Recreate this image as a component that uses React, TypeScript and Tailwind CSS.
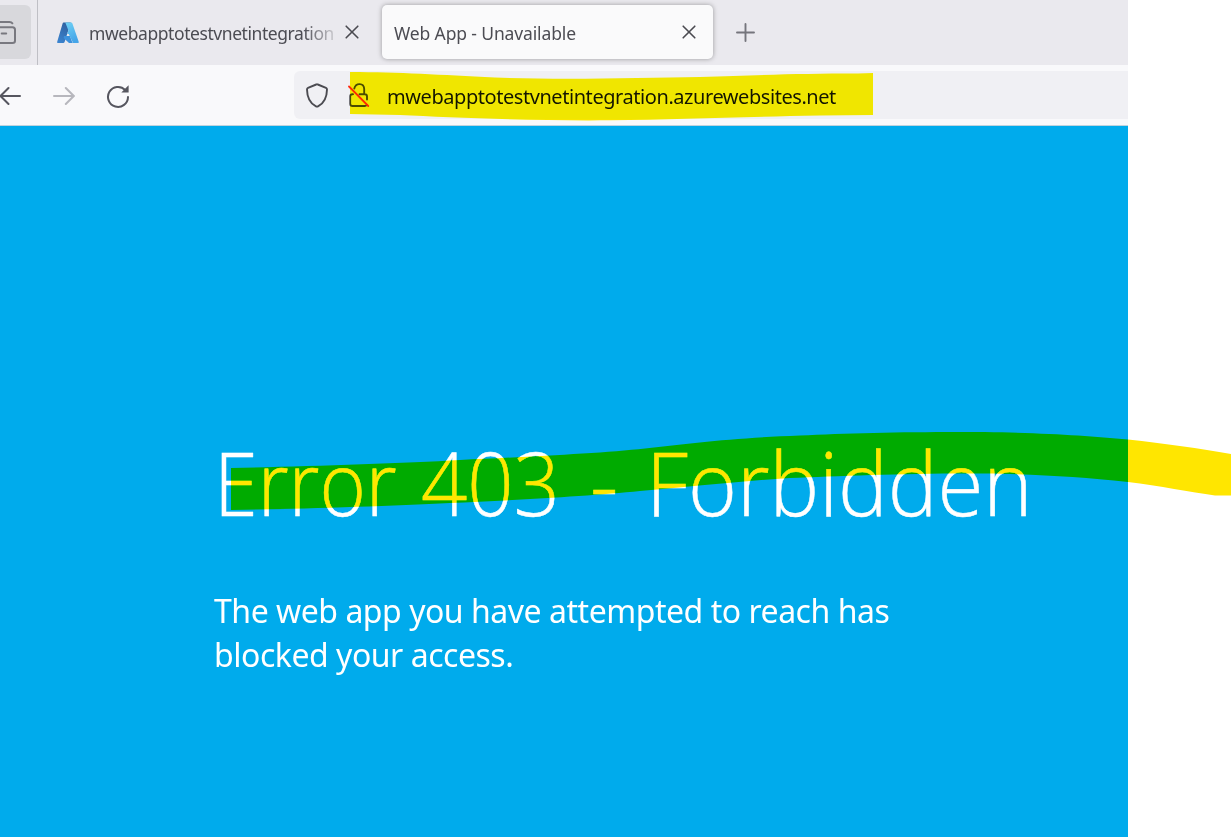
import React from "react";

function CloseIcon() {
  return (
    <svg width="14" height="14" viewBox="0 0 14 14" className="shrink-0" fill="none" stroke="#4a4a50" strokeWidth="1.6" strokeLinecap="round">
      <path d="M1.2 1.2 12.8 12.8M12.8 1.2 1.2 12.8" />
    </svg>
  );
}

function AzureIcon() {
  return (
    <svg width="22" height="22" viewBox="0 0 22 22" className="shrink-0">
      <defs>
        <linearGradient id="azl" x1="0.7" y1="0" x2="0.2" y2="1">
          <stop offset="0" stopColor="#2f5f9e" />
          <stop offset="1" stopColor="#3b84cf" />
        </linearGradient>
        <linearGradient id="azr" x1="0" y1="0" x2="0.4" y2="1">
          <stop offset="0" stopColor="#70d2f5" />
          <stop offset="1" stopColor="#46a5e8" />
        </linearGradient>
      </defs>
      <path d="M6.6 0.6h7.2L7.6 20c-.2.7-.7 1.1-1.4 1.1H1.2C.3 21.1 0 20.4.2 19.7L5.6 1.4c.1-.5.5-.8 1-.8Z" fill="url(#azl)" />
      <path d="M7 14h6l2.5 7.1H12L6.6 16Z" fill="#3c91dc" />
      <path d="M7.7.6h6.5c.6 0 1 .3 1.2.8l6.3 18.3c.3.8-.2 1.4-1 1.4h-6c.7-.2 1-.7.8-1.4L11.7 12H10.2l1.2-3.5L8.7 1.4C8.5.9 8.2.6 7.7.6Z" fill="url(#azr)" />
    </svg>
  );
}

function TabStrip() {
  return (
    <div className="flex h-[65px] shrink-0 bg-[#eae9ee] text-[#4c4c53]">
      <div className="flex w-[38px] shrink-0 border-r border-[#bfbfc5] pt-[5px]">
        <div className="h-[54px] w-[31px] rounded-r-[6px] bg-[#d8d8dc] pt-4">
          <svg width="16" height="23" viewBox="0 0 16 23" fill="none" stroke="#78787f" strokeWidth="2" strokeLinecap="round">
            <path d="M0 1h9.5Q11.5 1 12.3 2.3" />
            <path d="M0 6.2h12.5Q15 6.2 15 8.7v11Q15 22 12.5 22H0M1.7 12.5h4.5" />
          </svg>
        </div>
      </div>
      <div className="flex w-[344px] items-center pl-[19px]">
        <AzureIcon />
        <span className="ml-[10px] w-[248px] whitespace-nowrap pt-px text-[17.5px] tracking-[-0.43px] [mask-image:linear-gradient(to_right,black_214px,transparent_253px)]">
          mwebapptotestvnetintegration
        </span>
        <div className="mb-[2px] ml-[8px] flex"><CloseIcon /></div>
      </div>
      <div className="mt-[5px] flex h-[54px] w-[331px] items-center justify-between rounded-[5px] bg-[#fafafb] pr-[17px] pl-3 shadow-[0_0_5px_rgba(0,0,0,0.35)]">
        <span className="whitespace-nowrap pt-[2px] text-[17.5px] tracking-[-0.13px]">Web App - Unavailable</span>
        <CloseIcon />
      </div>
      <div className="flex items-center pl-[23px]">
        <svg width="19" height="19" viewBox="0 0 19 19" fill="none" stroke="#75757c" strokeWidth="1.9" strokeLinecap="round">
          <path d="M9.5 1v17M1 9.5h17" />
        </svg>
      </div>
    </div>
  );
}

function Toolbar() {
  return (
    <div className="flex h-[60px] shrink-0 bg-[#f9f9fb]">
      <div className="flex w-[294px] shrink-0 items-center pt-[2px]">
        <svg width="21" height="20" viewBox="0 0 21 20" fill="none" stroke="#56565f" strokeWidth="2" strokeLinecap="round" strokeLinejoin="round">
          <path d="M20 10H1M8.5 2 .5 10l8 8" />
        </svg>
        <svg width="22" height="20" viewBox="0 0 22 20" className="ml-[32px]" fill="none" stroke="#b7b7bd" strokeWidth="2" strokeLinecap="round" strokeLinejoin="round">
          <path d="M1 10h20M12.8 2l8 8-8 8" />
        </svg>
        <svg width="24" height="24" viewBox="0 0 24 24" className="ml-[31px]" fill="none" stroke="#56565f" strokeWidth="2" strokeLinecap="round">
          <path d="M22 13A10 10 0 1 1 19.2 6" />
          <path d="M22.6 1.2v7.3h-7.3z" fill="#56565f" stroke="none" />
        </svg>
      </div>
      <div className="mt-[6px] flex h-12 grow items-center rounded-l-[6px] bg-[#f0f0f4] pl-3">
        <svg width="23" height="25" viewBox="0 0 23 25" fill="none" stroke="#4b4b51" strokeWidth="1.9" strokeLinejoin="round">
          <path d="M10.2 1.5Q11 1.100 11.800 1.500L20 4.800Q21 5.200 21 6.400C20.900 15 17.500 20.500 12 23.400Q11 23.900 10 23.400C4.500 20.500 1.100 15 1 6.400Q1 5.200 2 4.800Z" />
        </svg>
        <svg width="22" height="26" viewBox="0 0 22 26" className="ml-[19px]" fill="none" stroke="#4b4b51" strokeWidth="1.9" strokeLinecap="round">
          <path d="M6.3 6.5C7.8.3 16 .8 16.2 7v4.6M5 12.3h-.6Q2.2 12.3 2.2 14.5v7.2Q2.2 24 4.5 24h12.2Q18 24 18.7 23M11.5 12.3h5.2Q19 12.3 19 14.6v3" />
          <path d="M1 4.5 20.3 24" stroke="#ff2a10" strokeWidth="1.8" />
        </svg>
        <span className="ml-[17px] whitespace-nowrap pt-[4px] text-[20px] tracking-[-0.44px] text-[#15141a]">mwebapptotestvnetintegration.azurewebsites.net</span>
      </div>
    </div>
  );
}

function Highlights() {
  return (
    <svg width="1231" height="837" viewBox="0 0 1231 837" className="pointer-events-none absolute inset-0 mix-blend-darken">
      <path fill="#ffe600" d="M350 72C400 72 440 75 495 77.5C560 80 640 78 700 77C760 75 800 73.5 858 73.5L873 73V115L820 115.5C740 117 680 119.5 610 120.3C530 121 450 117.5 400 115L350 114Z" />
      <path fill="#ffe600" d="M231 468C300 466.5 400 463.5 460 460C520 457 600 453.5 645 448.5C690 443.5 730 438 800 435.5C850 432.8 920 431.5 985 432C1050 433 1090 436 1128 439.5C1165 443.5 1200 448.5 1231 454V495.5H1215C1190 492 1160 486 1128 482C1080 477 1040 474.5 985 473.5C910 473 840 476 790 478C740 481 690 487 640 491C590 496 510 500.5 450 503C390 506 300 509 231 510Z" />
    </svg>
  );
}

export default function App() {
  return (
    <div className="relative isolate h-[837px] w-[1231px] overflow-hidden bg-white font-['Noto_Sans','Open_Sans',sans-serif]">
      <div className="flex h-full w-[1128px] flex-col overflow-hidden">
        <TabStrip />
        <Toolbar />
        <main className="grow border-t border-[#bfd3de] bg-[#00abec] pl-[214px] text-white">
          <h1 className="mt-[296px] flex h-[120px] whitespace-nowrap font-['Open_Sans','Noto_Sans',sans-serif] text-[88px] leading-[120px] font-light [-webkit-text-stroke:0.5px_white]">
            <span className="w-[207px] origin-left scale-x-[0.9]">Error</span>
            <span className="w-[169px] origin-left scale-x-[0.922]">403</span>
            <span className="w-[56px] origin-left">-</span>
            <span className="origin-left scale-x-[0.949]">Forbidden</span>
          </h1>
          <p className="mt-[47px] whitespace-nowrap text-[32px] leading-[44px] tracking-[-0.47px]">
            <span>The web app you have attempted to reach has</span>
            <br />
            <span>blocked your access.</span>
          </p>
        </main>
      </div>
      <Highlights />
    </div>
  );
}
